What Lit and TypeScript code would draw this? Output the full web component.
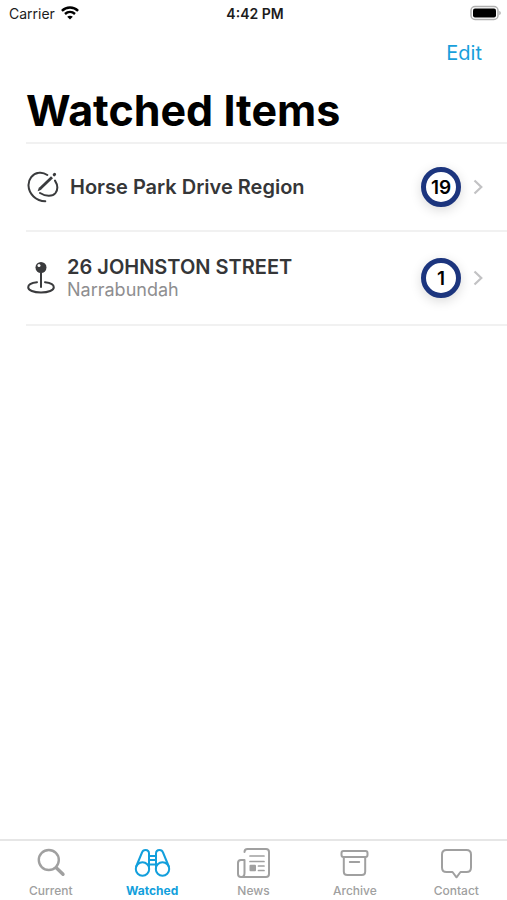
import { LitElement, html, css, svg, nothing } from "lit";
import { customElement, state } from "lit/decorators.js";
import { classMap } from "lit/directives/class-map.js";

const regionIcon = html`<svg class="item-icon region" viewBox="0 0 32 32" fill="none" stroke="#3a3b3d" stroke-width="2" stroke-linecap="round" aria-hidden="true">
  <path d="M20.3 4C17.500 2 14.500 1.300 11.800 1.800C5.500 2.800 1.300 8 1.500 14.500C1.800 23 9 29.800 18.300 30.300"/>
  <path d="M28 9.600C30.500 13.500 31 18.500 28.500 22C25.500 26 18.500 25.500 13 22"/>
  <path d="M13 17.800L25 6.200" stroke-width="2.800" stroke-linecap="butt"/>
  <path d="M10.600 20.200L14.400 18.700L12 16.200Z" fill="#3a3b3d" stroke="none"/>
  <path d="M27.200 3.800L27.600 3.400" stroke-width="3"/>
</svg>`;

const pinIcon = html`<svg class="item-icon pin" viewBox="0 0 28 34" fill="none" stroke="#3a3b3d" stroke-width="2" stroke-linecap="round" aria-hidden="true">
  <circle cx="14" cy="6.500" r="5.500" fill="#3a3b3d" stroke="none"/>
  <circle cx="12" cy="4.500" r="1.500" fill="#fff" stroke="none"/>
  <path d="M14 12V26"/>
  <path d="M10 21.200C5 21.800 1.200 23.600 1.200 26.200C1.200 29.300 6.500 31.500 14 31.500S26.800 29.300 26.800 26.200C26.800 23.600 23 21.800 18 21.200"/>
</svg>`;

const tabs = [
  {
    label: "Current",
    icon: svg`<circle cx="15.800" cy="13" r="10" stroke-width="2.400"/><path d="M23.500 21L30 27.300" stroke-width="3.400"/>`,
  },
  {
    label: "Watched",
    icon: svg`<circle cx="7.500" cy="22" r="6.700"/><circle cx="27.500" cy="22" r="6.700"/>
      <path d="M1.200 19.500L7 5.500C7.600 3.800 8.700 3 10.500 3C12.700 3 14 4.300 14 6.500V21.500M33.800 19.500L28 5.500C27.400 3.800 26.300 3 24.500 3C22.300 3 21 4.300 21 6.500V21.500M14 9H21M14 13H21M14 17.500H21"/>`,
  },
  {
    label: "News",
    icon: svg`<path d="M8.500 5C8.500 3 9.500 2 11.500 2H30C32 2 33 3 33 5V27C33 29 32 30 30 30H5C3 30 2 29 2 27V16C2 14 3 13 5 13H8.500V26C8.500 28.500 7.500 30 5.500 30"/>
      <path d="M14 9H28M14 14.500H28M22.500 19H28M22.500 23.500H28" stroke-width="1.700"/><rect x="13.500" y="17.800" width="6.500" height="6.500" rx="1" fill="currentColor" stroke="none"/>`,
  },
  {
    label: "Archive",
    icon: svg`<rect x="4.500" y="4" width="26" height="6" rx="2"/><path d="M6.800 10V24.500C6.800 26.800 8 28 10.300 28H24.700C27 28 28.200 26.800 28.200 24.500V10M12.800 15H22.200"/>`,
  },
  {
    label: "Contact",
    icon: svg`<path d="M7.500 3H27.500C30.500 3 32 4.800 32 7.500V20.500C32 23.200 30.500 25 27.500 25H21.500L17.500 30.300L13.500 25H7.500C4.500 25 3 23.200 3 20.500V7.500C3 4.800 4.500 3 7.500 3Z"/>`,
  },
];

const items = [
  { icon: regionIcon, title: "Horse Park Drive Region", place: "", count: 19 },
  { icon: pinIcon, title: "26 JOHNSTON STREET", place: "Narrabundah", count: 1 },
];

@customElement("app-root")
export class AppRoot extends LitElement {
  @state() private active = "Watched";

  static styles = css`
    :host {
      display: flex;
      flex-direction: column;
      min-height: 100vh;
      background: #fff;
      color: #000;
      font-family: Inter, "Liberation Sans", sans-serif;
    }
    * { box-sizing: border-box; }
    svg { display: block; flex: none; }
    button {
      font: inherit;
      border: 0;
      padding: 0;
      background: none;
      cursor: pointer;
    }
    .status {
      display: grid;
      grid-template-columns: 1fr auto 1fr;
      align-items: center;
      height: 26px;
      padding: 0 6px 0 9px;
      font-size: 14px;
      color: #1c1c1c;
    }
    .carrier { display: flex; align-items: center; gap: 6px; }
    .wifi { width: 18px; height: 14px; }
    .time { font-weight: 600; }
    .battery { width: 31px; height: 16px; justify-self: end; }
    .nav {
      display: flex;
      justify-content: flex-end;
      align-items: center;
      height: 53px;
      padding: 0 25px;
    }
    .edit {
      font-size: 20px;
      color: #189fdb;
    }
    h1 {
      margin: 0;
      padding: 0 26px;
      height: 63px;
      line-height: 63px;
      font-size: 43px;
      font-weight: 700;
    }
    main { flex: 1; }
    ul { list-style: none; margin: 0 0 0 26px; padding: 0; border-top: 2px solid #f1f1f1; }
    li { border-bottom: 2px solid #f1f1f1; }
    .item {
      display: flex;
      align-items: center;
      width: 100%;
      min-height: 86px;
      padding: 0 24px 0 1px;
      text-align: left;
      color: #353638;
      text-decoration: none;
    }
    .item.detailed { min-height: 92px; }
    .region { width: 32px; height: 32px; margin-right: 11px; }
    .pin { width: 28px; height: 34px; margin-right: 12px; }
    .text { flex: 1; display: flex; flex-direction: column; }
    .title { font-size: 20px; line-height: 24px; font-weight: 600; }
    .place { font-size: 18px; line-height: 22px; color: #8e8e90; }
    .count {
      display: grid;
      place-items: center;
      width: 40px;
      height: 40px;
      margin-right: 12px;
      border: 5px solid #1c357e;
      border-radius: 50%;
      background: #fff;
      box-shadow: 0 3px 12px #00000026;
      color: #000;
      font-size: 19px;
      font-weight: 600;
    }
    .chevron { width: 10px; height: 16px; }
    .tabs {
      display: grid;
      grid-template-columns: repeat(5, 1fr);
      height: 61px;
      border-top: 2px solid #e6e6e6;
      background: #fff;
    }
    .tab {
      display: flex;
      flex-direction: column;
      align-items: center;
      padding-top: 6px;
      gap: 4px;
      color: #a0a0a0;
      font-size: 12px;
      line-height: 16px;
      font-weight: 500;
    }
    .tab svg { width: 37px; height: 32px; }
    .tab.active { color: #129fdc; font-weight: 700; }
  `;

  render() {
    return html`
      <header>
        <div class="status">
          <span class="carrier">Carrier
            <svg class="wifi" viewBox="0 0 18 14" fill="none" stroke="#000" stroke-width="2.400" aria-hidden="true">
              <path d="M0.900 4.900C5.500 0.400 12.500 0.400 17.100 4.900"/>
              <path d="M4 8C7 5.200 11 5.200 14 8"/>
              <path d="M9 13.500L6.200 10.700C7.800 9.300 10.200 9.300 11.800 10.700Z" fill="#000" stroke="none"/>
            </svg>
          </span>
          <span class="time">4:42 PM</span>
          <svg class="battery" viewBox="0 0 31 16" aria-hidden="true">
            <rect x="1" y="1.500" width="27" height="13" rx="4" fill="#fff" stroke="#b0b0b0" stroke-width="1.500"/>
            <rect x="3" y="3.500" width="23" height="9" rx="2" fill="#000"/>
            <path d="M29.300 6C31.200 6.500 31.200 9.500 29.300 10Z" fill="#aaa"/>
          </svg>
        </div>
        <div class="nav"><button class="edit">Edit</button></div>
        <h1>Watched Items</h1>
      </header>
      <main>
        <ul>
          ${items.map(
            (i) => html`<li>
              <a class=${classMap({ item: true, detailed: !!i.place })} href="#">
                ${i.icon}
                <span class="text">
                  <span class="title">${i.title}</span>
                  ${i.place ? html`<span class="place">${i.place}</span>` : nothing}
                </span>
                <span class="count">${i.count}</span>
                <svg class="chevron" viewBox="0 0 10 16" fill="none" stroke="#c2c2c4" stroke-width="2.200" aria-hidden="true"><path d="M1.500 1.500L8.300 8L1.500 14.500"/></svg>
              </a>
            </li>`
          )}
        </ul>
      </main>
      <nav class="tabs">
        ${tabs.map(
          (t) => html`<button class=${classMap({ tab: true, active: t.label === this.active })} @click=${() => (this.active = t.label)}>
            <svg viewBox="-1 0 37 32" fill="none" stroke="currentColor" stroke-width="2" stroke-linejoin="round" stroke-linecap="round" aria-hidden="true">${t.icon}</svg>
            ${t.label}
          </button>`
        )}
      </nav>
    `;
  }
}
